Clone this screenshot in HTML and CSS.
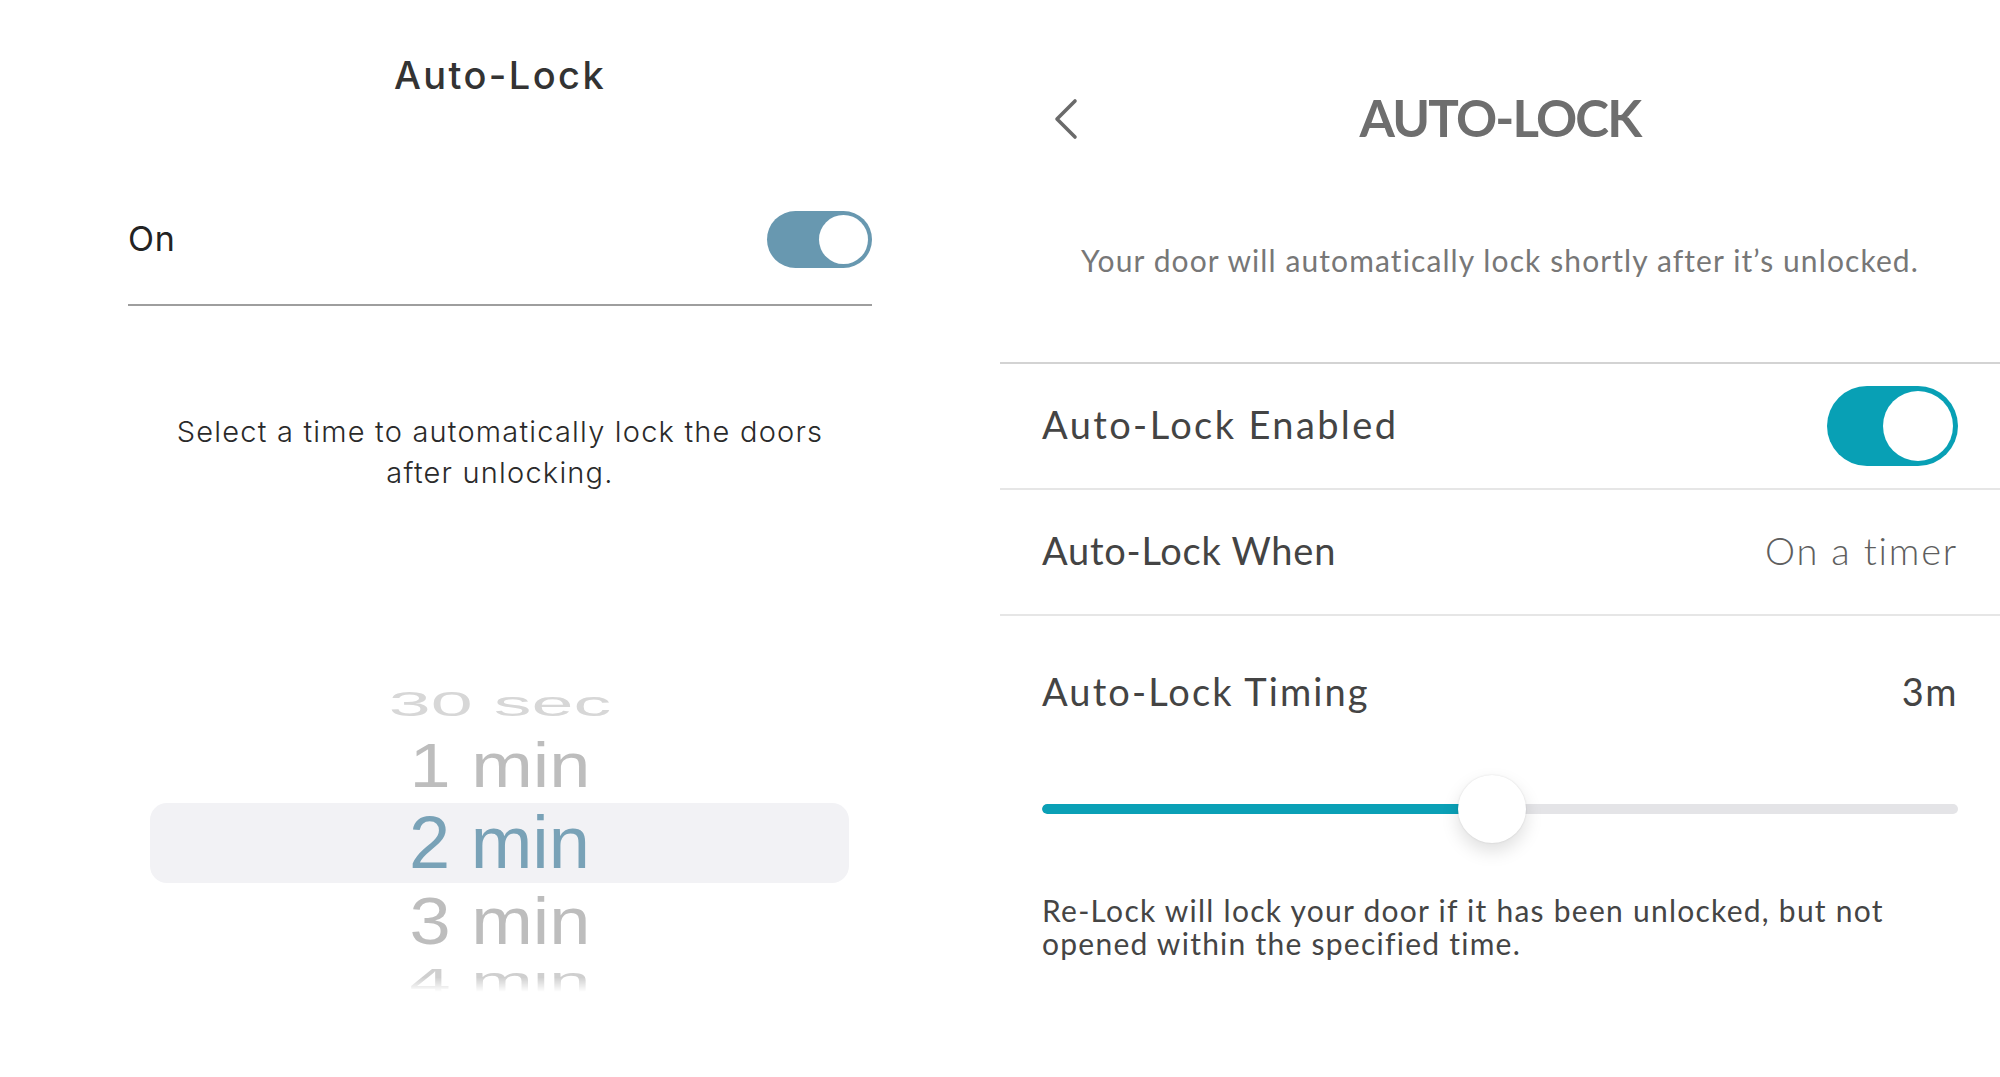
FILE: index.html
```html
<!DOCTYPE html>
<html lang="en">
<head>
<meta charset="utf-8">
<title>Auto-Lock</title>
<link rel="stylesheet" href="styles.css">
</head>
<body>
<div class="screen">
  <section class="panel panel-left">
    <h1 class="l-title">Auto-Lock</h1>
    <div class="l-row">
      <span class="l-label">On</span>
      <span class="switch switch-blue"><span class="knob"></span></span>
    </div>
    <p class="l-desc">Select a time to automatically lock the doors<br>after unlocking.</p>
    <div class="picker">
      <div class="pick pick-far-top">30 sec</div>
      <div class="pick pick-near-top">1 min</div>
      <div class="pick pick-selected">2 min</div>
      <div class="pick pick-near-bottom">3 min</div>
      <div class="pick pick-far-bottom">4 min</div>
    </div>
  </section>

  <section class="panel panel-right">
    <header class="r-head">
      <svg class="back" width="26" height="42" viewBox="0 0 26 42" aria-hidden="true">
        <polyline points="22,3 4,21 22,39" fill="none" stroke="#6a6a6a" stroke-width="3.6" stroke-linecap="round" stroke-linejoin="round"/>
      </svg>
      <h2 class="r-title">AUTO-LOCK</h2>
      <span></span>
    </header>
    <p class="r-desc">Your door will automatically lock shortly after it’s unlocked.</p>
    <div class="list">
      <div class="r-row">
        <span class="r-label r-label-enabled">Auto-Lock Enabled</span>
        <span class="switch switch-teal"><span class="knob"></span></span>
      </div>
      <div class="r-row">
        <span class="r-label r-label-when">Auto-Lock When</span>
        <span class="r-value">On a timer</span>
      </div>
      <div class="timing">
        <div class="t-head">
          <span class="r-label r-label-timing">Auto-Lock Timing</span>
          <span class="r-num">3m</span>
        </div>
        <div class="slider">
          <div class="track">
            <div class="fill" style="width:49.1%"></div>
          </div>
          <div class="thumb" style="left:49.1%"></div>
        </div>
        <p class="note">Re-Lock will lock your door if it has been unlocked, but not<br>opened within the specified time.</p>
      </div>
    </div>
  </section>
</div>
</body>
</html>
```

FILE: styles.css
```css
* { box-sizing: border-box; }
html, body { margin: 0; padding: 0; background: #ffffff; }
body { width: 2000px; height: 1077px; overflow: hidden; }

.screen {
  display: flex;
  width: 2000px;
  height: 1077px;
}

.panel { width: 1000px; height: 1077px; }

/* ---------- left panel ---------- */
.panel-left {
  padding: 51px 128px 0;
  font-family: Inter, "Liberation Sans", sans-serif;
  color: #2b2b2b;
}

.l-title {
  margin: 0;
  font-size: 38px;
  line-height: 48px;
  font-weight: 500;
  letter-spacing: 2.4px;
  text-align: center;
  color: #333333;
}

.l-row {
  margin-top: 76px;
  height: 131px;
  display: flex;
  align-items: center;
  justify-content: space-between;
  border-bottom: 2px solid #9e9e9e;
}

.l-label {
  font-size: 34px;
  line-height: 40px;
  padding-bottom: 2px;
  letter-spacing: 0.8px;
  color: #232323;
}

.switch {
  display: flex;
  justify-content: flex-end;
  align-items: center;
  flex: none;
}

.switch .knob {
  display: block;
  background: #ffffff;
  border-radius: 50%;
}

.switch-blue {
  width: 105px;
  height: 57px;
  padding: 0 4px;
  border-radius: 29px;
  background: #6898b0;
}
.switch-blue .knob { width: 49px; height: 49px; }

.l-desc {
  margin: 105px 0 0;
  font-size: 29px;
  line-height: 41px;
  font-weight: 300;
  letter-spacing: 1.2px;
  text-align: center;
  color: #2a2a2a;
}

.picker {
  margin-top: 182px;
  display: flex;
  flex-direction: column;
  font-family: "Liberation Sans", Arial, sans-serif;
  font-size: 74px;
  text-align: center;
}

.pick { white-space: nowrap; }

.pick-far-top {
  height: 57px;
  line-height: 57px;
  margin-bottom: 4px;
  color: #d7d7d7;
  transform: scale(1.02, 0.48);
}
.pick-near-top {
  height: 59px;
  line-height: 59px;
  margin-bottom: 8px;
  color: #bdbdbd;
  transform: scaleY(0.86);
}
.pick-selected {
  height: 80px;
  line-height: 80px;
  margin: 0 23px 0 22px;
  border-radius: 17px;
  background: #f2f2f5;
  color: #79a2b7;
}
.pick-near-bottom {
  height: 76px;
  line-height: 76px;
  color: #bdbdbd;
  transform: scaleY(0.91);
}
.pick-far-bottom {
  height: 44px;
  line-height: 44px;
  color: #cfcfcf;
  transform: scaleY(0.55);
  -webkit-mask-image: linear-gradient(to bottom, #000 35%, rgba(0,0,0,0) 95%);
  mask-image: linear-gradient(to bottom, #000 35%, rgba(0,0,0,0) 95%);
}

/* ---------- right panel ---------- */
.panel-right {
  padding-top: 70px;
  font-family: Lato, "Open Sans", sans-serif;
  color: #454545;
}

.r-head {
  height: 98px;
  display: grid;
  grid-template-columns: 1fr auto 1fr;
  align-items: center;
}

.back { margin-left: 53px; display: block; }

.r-title {
  margin: 0;
  padding-bottom: 2px;
  font-size: 51px;
  line-height: 60px;
  font-weight: 700;
  letter-spacing: -1.8px;
  color: #6e6e6e;
}

.r-desc {
  margin: 72px 0 0;
  font-size: 30px;
  line-height: 40px;
  letter-spacing: 1.1px;
  text-align: center;
  color: #777777;
}

.list {
  margin-top: 82px;
  border-top: 2px solid #d3d3d3;
}

.r-row {
  height: 126px;
  padding: 0 42px;
  display: flex;
  align-items: center;
  justify-content: space-between;
  border-bottom: 2px solid #e6e6e6;
}

.r-label {
  font-size: 38px;
  line-height: 48px;
  padding-bottom: 5px;
  letter-spacing: 1.2px;
  color: #444444;
}
.r-label-enabled { letter-spacing: 2.4px; }
.r-label-when { letter-spacing: 0.75px; }
.r-label-timing { letter-spacing: 2.1px; }

.r-value {
  font-size: 38px;
  line-height: 48px;
  padding-bottom: 5px;
  font-weight: 300;
  letter-spacing: 1.8px;
  color: #5e5e5e;
}

.r-num {
  font-size: 38px;
  line-height: 48px;
  padding-bottom: 5px;
  letter-spacing: 1.5px;
  color: #444444;
}

.switch-teal {
  width: 131px;
  height: 80px;
  padding: 0 5px;
  border-radius: 40px;
  background: #08a0b5;
}
.switch-teal .knob { width: 70px; height: 70px; }

.timing { padding: 51px 42px 0; }

.t-head {
  display: flex;
  justify-content: space-between;
  align-items: center;
}

.slider {
  position: relative;
  margin-top: 55px;
  height: 68px;
  display: flex;
  align-items: center;
}

.track {
  width: 100%;
  height: 10px;
  border-radius: 5px;
  background: #e4e4e7;
  overflow: hidden;
}

.fill {
  height: 100%;
  background: #0aa0b6;
  border-radius: 5px 0 0 5px;
}

.thumb {
  position: absolute;
  top: 0;
  width: 68px;
  height: 68px;
  margin-left: -34px;
  border-radius: 50%;
  background: #ffffff;
  box-shadow: 0 8px 18px rgba(0, 0, 0, 0.13), 0 0 2px rgba(0, 0, 0, 0.12);
}

.note {
  margin: 51px 0 0;
  font-size: 30px;
  line-height: 33px;
  letter-spacing: 1.25px;
  color: #454545;
}
```
